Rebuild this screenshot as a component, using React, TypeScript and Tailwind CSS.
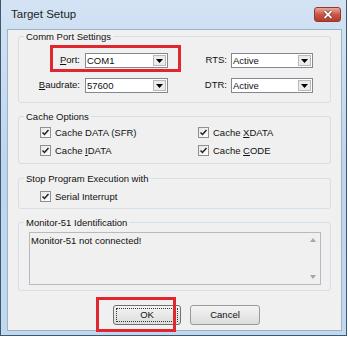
import React from "react";

function Combo({ value, w }: { value: string; w: string }) {
  return (
    <div className={`flex h-[15px] ${w} items-stretch border border-[#828790] bg-white`}>
      <span className="flex-1 pl-[1px] leading-[13px]">{value}</span>
      <span className="m-[1px] flex w-[13px] items-center justify-center border border-[#b8b8b8] bg-[#ececec]">
        <svg width="7" height="4" viewBox="0 0 7 4"><path d="M0 0h7L3.5 4z" fill="#000" /></svg>
      </span>
    </div>
  );
}

function Check({ children }: { children: React.ReactNode }) {
  return (
    <div className="flex h-[11px] items-center gap-[4px]">
      <span className="flex h-[11px] w-[11px] items-center justify-center border border-[#8e8f8f] bg-gradient-to-br from-[#e6e6e6] to-white">
        <svg width="9" height="9" viewBox="0 0 9 9"><path d="M1.5 4.5l2 2 4-4.5" fill="none" stroke="#222" strokeWidth="1.5" /></svg>
      </span>
      <span className="leading-[13px]">{children}</span>
    </div>
  );
}

function Group({ title, h, className, children }: { title: string; h: string; className?: string; children: React.ReactNode }) {
  return (
    <fieldset className={`${h} ${className ?? ""} rounded-[3px] border border-[#d5dfe5]`}>
      <legend className="ml-[5px] px-[2px] leading-[13px]">{title}</legend>
      {children}
    </fieldset>
  );
}

export default function App() {
  return (
    <div className="relative h-[337px] w-[348px] bg-white font-['Liberation_Sans',Arial,sans-serif] text-[9.5px] text-[#111]">
      <div className="flex h-[336px] w-[347px] flex-col border-x border-b border-[#3c5873] bg-gradient-to-b from-[#d3e3f4] via-[#bfd5ed] to-[#c2d8ef]">
        <div className="flex h-[29px] items-center justify-between pl-[10px] pr-[5px]">
          <span className="text-[11.5px] text-[#1e1e1e]">Target Setup</span>
          <div className="flex h-[15px] w-[27px] items-center justify-center rounded-[3px] border border-[#8d3a30] bg-gradient-to-b from-[#e9a99b] via-[#c9564a] to-[#b8392c]">
            <svg width="10" height="9" viewBox="0 0 10 9">
              <path d="M1.5 1l7 7M8.5 1l-7 7" stroke="#5a1a12" strokeWidth="3" />
              <path d="M1.5 1l7 7M8.5 1l-7 7" stroke="#fff" strokeWidth="1.8" />
            </svg>
          </div>
        </div>
        <div className="mb-[4px] ml-[6px] mr-[4px] flex flex-1 flex-col border border-[#9db3ca] bg-[#f0f0f0] px-[10px]">
          <Group title="Comm Port Settings" h="h-[73px]">
            <div className="flex flex-col gap-[10px] pt-[10px]">
              <div className="flex items-center">
                <span className="w-[61px] text-right"><u>P</u>ort:</span>
                <span className="ml-[5px]"><Combo value="COM1" w="w-[83px]" /></span>
                <span className="w-[59px] text-right">RTS:</span>
                <span className="ml-[4px]"><Combo value="Active" w="w-[82px]" /></span>
              </div>
              <div className="flex items-center">
                <span className="w-[61px] text-right"><u>B</u>audrate:</span>
                <span className="ml-[5px]"><Combo value="57600" w="w-[83px]" /></span>
                <span className="w-[59px] text-right">DTR:</span>
                <span className="ml-[4px]"><Combo value="Active" w="w-[82px]" /></span>
              </div>
            </div>
          </Group>
          <Group title="Cache Options" h="h-[54px]" className="mt-[7px]">
            <div className="grid grid-cols-[158px_1fr] gap-y-[7px] pl-[21px] pt-[4px]">
              <Check>Cache DATA (SFR)</Check>
              <Check>Cache <u>X</u>DATA</Check>
              <Check>Cache <u>I</u>DATA</Check>
              <Check>Cache <u>C</u>ODE</Check>
            </div>
          </Group>
          <Group title="Stop Program Execution with" h="h-[37px]" className="mt-[8px]">
            <div className="pl-[21px] pt-[6px]">
              <Check>Serial Interrupt</Check>
            </div>
          </Group>
          <Group title="Monitor-51 Identification" h="h-[75px]" className="mt-[7px]">
            <div className="pl-[10px] pt-[3px]">
              <div className="flex h-[53px] w-[292px] border border-[#b5b9c0] bg-[#f0f0f0]">
                <span className="flex-1 pl-[1px] pt-[1px] leading-[13px]">Monitor-51 not connected!</span>
                <span className="flex w-[15px] flex-col items-center justify-between py-[5px]">
                  <svg width="6" height="4" viewBox="0 0 6 4"><path d="M0 4h6L3 0z" fill="#a6a6a6" /></svg>
                  <svg width="6" height="4" viewBox="0 0 6 4"><path d="M0 0h6L3 4z" fill="#a6a6a6" /></svg>
                </span>
              </div>
            </div>
          </Group>
          <div className="flex gap-[9px] pl-[95px] pt-[14px]">
            <div className="flex h-[20px] w-[68px] items-center justify-center rounded-[3px] border border-[#707070] bg-gradient-to-b from-[#f4f4f4] to-[#dcdcdc] p-[2px]">
              <span className="flex h-full w-full items-center justify-center border border-dotted border-[#333]">OK</span>
            </div>
            <div className="flex h-[20px] w-[70px] items-center justify-center rounded-[3px] border border-[#9a9a9a] bg-gradient-to-b from-[#f4f4f4] to-[#dcdcdc]">
              Cancel
            </div>
          </div>
        </div>
      </div>
      <div className="absolute left-[50px] top-[45px] h-[27px] w-[131px] border-[3px] border-[#e0262e]" />
      <div className="absolute left-[96px] top-[297px] h-[35px] w-[80px] border-[3px] border-[#e0262e]" />
    </div>
  );
}
